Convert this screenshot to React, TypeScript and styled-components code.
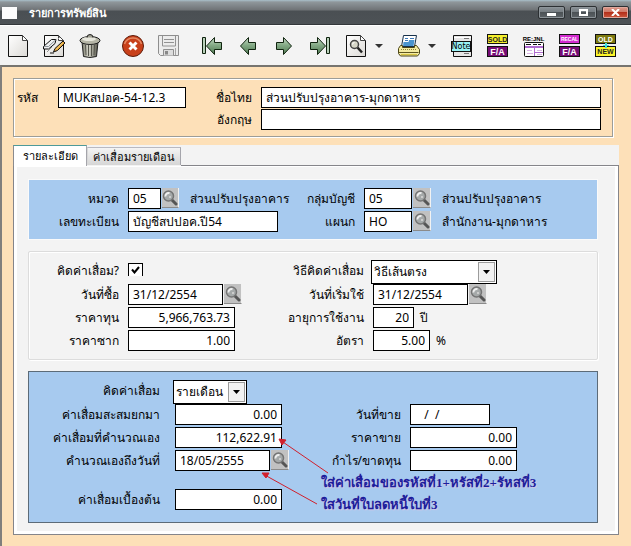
import React from "react";
import styled, { createGlobalStyle } from "styled-components";

const GlobalStyle = createGlobalStyle`
  * { box-sizing: border-box; }
  html, body, #root { height: 100%; }
  body {
    margin: 0;
    background: #fde0b8;
    color: #000;
    font: 12px/20px "Noto Sans", "Liberation Sans", sans-serif;
  }
  input, select, button { font: inherit; color: inherit; }
`;

/* ---------- window chrome ---------- */

const Window = styled.div`
  min-height: 100%;
  display: flex;
  flex-direction: column;
  background: #fde0b8;
`;

const TitleBar = styled.header`
  height: 26px;
  flex: none;
  display: flex;
  align-items: center;
  gap: 12px;
  padding: 0 2px;
  border-bottom: 1px solid #fff;
  background: linear-gradient(#a9c0ca 0, #8f979b 2px, #6f7376 10px, #4a4f53 11px, #4d5256 24px, #33373a 24px);
`;

const WindowMark = styled.span`
  width: 15px;
  height: 12px;
  background: #fcfcfc;
`;

const Title = styled.h1`
  flex: 1;
  margin: 0;
  font-size: 11px;
  line-height: 20px;
  font-weight: 700;
  color: #fff;
`;

const WindowButtons = styled.div`
  display: flex;
  gap: 5px;
`;

const WindowButton = styled.button<{ $close?: boolean }>`
  width: 27px;
  height: 13px;
  padding: 0;
  display: grid;
  place-items: center;
  border: 1px solid #2c3033;
  border-radius: 2px;
  box-shadow: inset 0 0 0 1px ${(p) => (p.$close ? "#e0a79c" : "#8d9499")};
  background: ${(p) =>
    p.$close
      ? "linear-gradient(#dc9a8c 0, #cf7563 50%, #b5301b 50%, #cc5a40 100%)"
      : "linear-gradient(#8b9297 0, #747b80 50%, #4c5256 50%, #5d6367 100%)"};
`;

const Toolbar = styled.div`
  height: 39px;
  flex: none;
  display: flex;
  align-items: center;
  gap: 7px;
  background: #f3f3f3;
`;

const ToolGroup = styled.div`
  display: flex;
  align-items: center;
`;

const ToolButton = styled.button`
  width: 36px;
  height: 36px;
  padding: 0;
  display: grid;
  place-items: center;
  border: 0;
  background: none;
`;

const CaretButton = styled(ToolButton)`
  width: 10px;
`;

const Form = styled.main`
  flex: 1;
  padding: 11px 12px 12px 11px;
  border-top: 2px solid #76746f;
  border-left: 2px solid #807e7c;
`;

/* ---------- fields ---------- */

const TextField = styled.input<{ $width?: number; $align?: "left" | "right" }>`
  width: ${(p) => (p.$width ? `${p.$width}px` : "100%")};
  height: 21px;
  padding: 0 4px;
  border: 1px solid #000;
  border-radius: 0;
  background: #fff;
  text-align: ${(p) => p.$align ?? "left"};
`;

const Label = styled.label`
  justify-self: end;
  padding-top: 1px;
  white-space: nowrap;
`;

const LeadLabel = styled(Label)`
  justify-self: start;
`;

const InsetLabel = styled(Label)`
  margin-right: 6px;
`;

const Field = styled.div`
  display: flex;
  align-items: flex-start;
`;

const Note = styled.span<{ $near?: boolean }>`
  margin-left: ${(p) => (p.$near ? 6 : 11)}px;
  padding-top: 1px;
  white-space: nowrap;
`;

const LookupButton = styled.button`
  width: 18px;
  height: 20px;
  margin-left: 1px;
  padding: 0;
  display: grid;
  place-items: center;
  border: 0;
  border-right: 1px solid #f2f2f2;
  border-bottom: 1px solid #8b8b8b;
  background: #c1c1c1;
`;

const SelectBox = styled.div<{ $width: number }>`
  position: relative;
  width: ${(p) => p.$width}px;
  height: 24px;
  margin-left: -2px;
`;

const SelectField = styled.select`
  width: 100%;
  height: 100%;
  padding: 0 18px 0 2px;
  border: 1px solid #000;
  border-radius: 0;
  background: #fff;
  appearance: none;
`;

const SelectArrow = styled.span`
  position: absolute;
  top: 2px;
  right: 2px;
  bottom: 2px;
  width: 17px;
  display: grid;
  place-items: center;
  border: 1px solid #9c9c9c;
  background: #f2f2f2;
  pointer-events: none;
`;

const CheckCell = styled.span`
  display: grid;
  margin-top: 3px;
  > * { grid-area: 1 / 1; }
  svg { place-self: center; pointer-events: none; visibility: hidden; }
  input:checked + svg { visibility: visible; }
`;

const CheckInput = styled.input`
  width: 15px;
  height: 13px;
  margin: 0;
  border: 1px solid #000;
  border-bottom: 0;
  background: #fff;
  appearance: none;
`;

/* ---------- sections ---------- */

const KeyBox = styled.section`
  display: grid;
  grid-template-columns: 32px 128px 57px minmax(0, 1fr);
  grid-auto-rows: 22px;
  column-gap: 9px;
  margin-right: 6px;
  padding: 8px 11px 5px 3px;
  border: 1px solid #9d9d98;
  box-shadow: 1px 1px 0 #fff, inset 1px 1px 0 #fff;
`;

const EnglishLabel = styled(Label)`
  grid-column: 3;
`;

const TabStrip = styled.div`
  display: flex;
  align-items: flex-end;
  height: 21px;
  margin-top: 8px;
  background: #f3f3f3;
`;

const Tab = styled.button<{ $active?: boolean }>`
  width: ${(p) => (p.$active ? 74 : 94)}px;
  height: ${(p) => (p.$active ? 21 : 18)}px;
  margin-bottom: ${(p) => (p.$active ? 0 : 1)}px;
  padding: 0;
  border: 1px solid #a5a5ab;
  border-top-color: ${(p) => (p.$active ? "#4d9a9a" : "#b9b9c0")};
  border-left-color: ${(p) => (p.$active ? "#8b8b8f" : "#d8d8d8")};
  border-bottom: 0;
  background: ${(p) => (p.$active ? "#fff" : "linear-gradient(#f4f4f4, #d6d6d6)")};
  font-size: 11px;
  line-height: 16px;
  white-space: nowrap;
`;

const TabRule = styled.span`
  flex: 1;
  height: 1px;
  background: #85858a;
`;

const TabBody = styled.div`
  padding: 1px 3px 3px;
  border: 1px solid #85858a;
  border-top: 0;
  background: #fff;
`;

const TabFill = styled.div`
  display: flex;
  flex-direction: column;
  gap: 11px;
  padding: 12px 17px 8px 11px;
  background: #f3f3f3;
`;

const Panel = styled.section<{ $tone: "soft" | "plain" | "framed"; $columns: string; $rows: string }>`
  position: relative;
  display: grid;
  grid-template-columns: ${(p) => p.$columns};
  grid-template-rows: ${(p) => p.$rows};
  column-gap: 9px;
  align-items: start;
  padding: 8px 9px 7px 9px;
  border: 1px solid
    ${(p) => (p.$tone === "soft" ? "#fafafa" : p.$tone === "plain" ? "#dcdcdc" : "#5c6b78")};
  border-radius: ${(p) => (p.$tone === "plain" ? 2 : 0)}px;
  box-shadow: ${(p) => (p.$tone === "plain" ? "inset 1px 1px 0 #fff, 1px 1px 0 #fff" : "none")};
  background: ${(p) => (p.$tone === "plain" ? "#f3f3f3" : "#a7caef")};
`;

/* ---------- callouts drawn over the form ---------- */

const Callouts = styled.div`
  position: absolute;
  left: 292px;
  top: 100px;
  color: #1d1d9c;
  font: 700 13px/22px "Liberation Serif", serif;
  text-shadow: 1px 1px 1px #d9c4e4;
  white-space: nowrap;
  pointer-events: none;
  p { margin: 0; }
`;

const Arrows = styled.svg`
  position: absolute;
  left: 231px;
  top: 64px;
  pointer-events: none;
`;

/* ---------- icons ---------- */

const Caret = () => (
  <svg width="8" height="4" viewBox="0 0 8 4"><path d="M0 0h8L4 4z" fill="#333" /></svg>
);

const Magnifier = () => (
  <svg width="16" height="16" viewBox="0 0 16 16">
    <path d="M9.500 9.500L14 14" stroke="#555" strokeWidth="3" strokeLinecap="round" />
    <circle cx="6.500" cy="6" r="5" fill="#a5a9a9" stroke="#747474" strokeWidth="1.500" />
    <path d="M3.500 6.500a3 3 0 0 1 4-3.200" fill="none" stroke="#eee" strokeWidth="2" />
    <path d="M7 6h2v2H7z" fill="#ccc" />
  </svg>
);

const Svg = ({ children }: { children: React.ReactNode }) => (
  <svg width="24" height="24" viewBox="0 0 24 24">
    <defs>
      <linearGradient id="paper" x1="0" y1="0" x2="1" y2="1">
        <stop offset="0" stopColor="#fff" /><stop offset="1" stopColor="#dcdad6" />
      </linearGradient>
      <linearGradient id="green" x1="0" y1="0" x2="0" y2="1">
        <stop offset="0" stopColor="#c8dcc8" /><stop offset=".45" stopColor="#84aa86" /><stop offset="1" stopColor="#4f7a52" />
      </linearGradient>
      <linearGradient id="can" x1="0" y1="0" x2="1" y2="0">
        <stop offset="0" stopColor="#77776a" /><stop offset=".4" stopColor="#d8d8cc" /><stop offset="1" stopColor="#55554a" />
      </linearGradient>
    </defs>
    {children}
  </svg>
);

const Page = () => (
  <>
    <path d="M2.500 1.500h14l5 5v16h-19z" fill="url(#paper)" stroke="#111" />
    <path d="M16.500 1.500v5h5z" fill="#fff" stroke="#444" />
  </>
);

const NewIcon = () => <Svg><Page /></Svg>;

const EditIcon = () => (
  <Svg>
    <Page />
    <path d="M5 18l5-5M16 5l2-2" stroke="#999" />
    <path d="M1.500 12.500l8-7h4.500l-1 4-6.500 5.500h-5z" fill="#eef0f2" stroke="#111" />
    <path d="M2 12.500h4.500l7-6.500" fill="none" stroke="#8c9298" />
    <path d="M11.500 18l1.500-3.500L21 7l2 2-7.500 7.500z" fill="#e2a33a" stroke="#111" />
    <path d="M14 15.500L20.500 9" stroke="#f8d47c" />
    <path d="M8 19h4" stroke="#111" />
  </Svg>
);

const TrashIcon = () => (
  <Svg>
    <path d="M4 8h16l-1.500 14.500q-6.500 2-13 0z" fill="url(#can)" stroke="#222" />
    <path d="M7.500 11l.5 10M10.500 11v11M13.500 11v11M16.500 11l-.5 10" stroke="#55554c" />
    <ellipse cx="12" cy="6.500" rx="10" ry="4" fill="#b5b5a6" stroke="#222" />
    <ellipse cx="11" cy="5" rx="7" ry="2" fill="#e6e6dc" />
    <path d="M9 3.500q0-3 3-3t3 3" fill="#a0a092" stroke="#222" />
  </Svg>
);

const CancelIcon = () => (
  <Svg>
    <circle cx="12" cy="12" r="10.500" fill="#c8401a" stroke="#5e1c0a" />
    <path d="M3.500 10a9 9 0 0 1 17 0" fill="none" stroke="#e68a64" strokeWidth="1.500" />
    <path d="M8.500 8.500l7 7M15.500 8.500l-7 7" stroke="#fff" strokeWidth="3" />
  </Svg>
);

const SaveIcon = () => (
  <Svg>
    <path d="M1.500 1.500h20v20h-18l-2-2z" fill="#ececec" stroke="#8e8e8e" />
    <path d="M5.500 2v10h13V2M7 5.500h10M7 8.500h10" fill="none" stroke="#929292" />
    <path d="M6.500 21.500v-6h10v6" fill="#ddd" stroke="#8e8e8e" />
    <path d="M8 17h3v3.500H8z" fill="#888" />
    <path d="M18.500 14v7" stroke="#a5a5a5" />
  </Svg>
);

const ArrowIcon = ({ back, stop }: { back?: boolean; stop?: boolean }) => (
  <Svg>
    <g transform={back ? "matrix(-1 0 0 1 24 0)" : undefined}>
      <path
        d={stop ? "M2.500 8.500h7v-5l8 8.500-8 8.500v-5h-7z" : "M4.500 8.500h7v-5l8 8.500-8 8.500v-5h-7z"}
        fill="url(#green)"
        stroke="#10240f"
      />
      {stop && <path d="M18.500 3.500h3v16h-3z" fill="#b9d1ba" stroke="#10240f" />}
    </g>
  </Svg>
);

const PreviewIcon = () => (
  <Svg>
    <Page />
    <path d="M13.500 13.500l4.500 5" stroke="#222" strokeWidth="2.500" />
    <circle cx="10.500" cy="10.500" r="4" fill="#d7d7c8" stroke="#444" strokeWidth="1.500" />
    <path d="M8.500 10.500q0-2 2-2" stroke="#fff" fill="none" />
  </Svg>
);

const PrintIcon = () => (
  <Svg>
    <path d="M6.500 1.500h13l-2 11H4.500z" fill="#fff" stroke="#17304a" />
    <path d="M8 4.500h3M13 4.500h4M8 6.500h3" stroke="#3c78b8" />
    <path d="M12 6h5.500l-1 6H6l.5-4h5z" fill="#4a94cf" />
    <path d="M3.500 11.500h2v2h12v-2h2l3 4v4l-2 2.500h-17l-2-2.500v-5z" fill="#f3eaa0" stroke="#4a4415" />
    <path d="M4 15.500h15" stroke="#8a7f36" strokeDasharray="1 1" />
    <path d="M1.500 18.500h20" stroke="#5d5520" />
    <path d="M4 20.500h16" stroke="#d8c542" />
  </Svg>
);

const NoteIcon = () => (
  <Svg>
    <path d="M3.500 1.500h18v21h-18z" fill="#e6e6e6" stroke="#111" />
    <path d="M4 3.500h17" stroke="#fff" />
    <path d="M14 4.500h5M14 19.500h5" stroke="#777" />
    <rect x="1.500" y="7.500" width="19" height="10" fill="#9af2f4" stroke="#111" />
    <text x="11" y="15" fontSize="8" textAnchor="middle" fontFamily="DejaVu Sans, sans-serif">Note</text>
  </Svg>
);

const BadgeIcon = ({ top, bottom, topFill, topInk, bottomFill, bottomInk, spark }: {
  top: string; bottom: string; topFill: string; topInk: string; bottomFill: string; bottomInk: string; spark?: boolean;
}) => (
  <Svg>
    <g fontFamily="Liberation Sans, sans-serif" textAnchor="middle" fontWeight="700">
      <rect x="1.500" y=".5" width="20" height="9" fill={topFill} stroke="#111" />
      <text x="11.500" y={top.length > 4 ? 7 : 8} fontSize={top.length > 4 ? 5 : 7} fill={topInk}>{top}</text>
      <rect x="1.500" y="12.500" width="20" height="10" fill={bottomFill} stroke="#111" />
      <text x="11.500" y={bottom === "F/A" ? 21 : 20} fontSize={bottom === "F/A" ? 9 : 7} fill={bottomInk}>{bottom}</text>
    </g>
    {spark && <path d="M11 9h2v5h-2zM9 11h6v1H9z" fill="#3fdede" />}
  </Svg>
);

const JournalIcon = () => (
  <Svg>
    <text x="11.500" y="7" fontSize="6" fontWeight="700" textAnchor="middle" fontFamily="Liberation Sans, sans-serif">RE:JNL</text>
    <rect x="2.500" y="8.500" width="19" height="14" rx="1" fill="#fff" stroke="#111" />
    <path d="M4 10.500h5M11 10.500h4M16 10.500h3" stroke="#111" />
    <path d="M3 13h18" stroke="#b06bd0" strokeWidth="2" />
    <path d="M12.500 13v9M13 18.500h8" stroke="#b06bd0" />
    <path d="M5 16.500h5M5 19.500h6M15 16.500h5M15 20.500h5" stroke="#d8b4e6" />
  </Svg>
);

const Lookup = ({ name }: { name: string }) => (
  <LookupButton type="button" aria-label={name}><Magnifier /></LookupButton>
);

const Select = ({ id, width, value }: { id: string; width: number; value: string }) => (
  <SelectBox $width={width}>
    <SelectField id={id} defaultValue={value}><option>{value}</option></SelectField>
    <SelectArrow><svg width="7" height="4" viewBox="0 0 7 4"><path d="M0 0h7L3.500 4z" /></svg></SelectArrow>
  </SelectBox>
);

const Tool = ({ name, children }: { name: string; children: React.ReactNode }) => (
  <ToolButton type="button" aria-label={name}>{children}</ToolButton>
);

export default function App() {
  return (
    <Window>
      <GlobalStyle />
      <TitleBar>
        <WindowMark />
        <Title>รายการทรัพย์สิน</Title>
        <WindowButtons>
          <WindowButton type="button" aria-label="Minimize">
            <svg width="9" height="7"><path d="M0 4h9v3H0z" fill="#fff" /></svg>
          </WindowButton>
          <WindowButton type="button" aria-label="Maximize">
            <svg width="9" height="7"><path d="M1 1h7v5H1z" fill="none" stroke="#fff" strokeWidth="2" /></svg>
          </WindowButton>
          <WindowButton type="button" aria-label="Close" $close>
            <svg width="9" height="7"><path d="M1 0l7 7M8 0L1 7" stroke="#fff" strokeWidth="2" /></svg>
          </WindowButton>
        </WindowButtons>
      </TitleBar>

      <Toolbar>
        <ToolGroup>
          <Tool name="New"><NewIcon /></Tool>
          <Tool name="Edit"><EditIcon /></Tool>
          <Tool name="Delete"><TrashIcon /></Tool>
        </ToolGroup>
        <ToolGroup>
          <Tool name="Cancel"><CancelIcon /></Tool>
          <Tool name="Save"><SaveIcon /></Tool>
        </ToolGroup>
        <ToolGroup>
          <Tool name="First"><ArrowIcon back stop /></Tool>
          <Tool name="Previous"><ArrowIcon back /></Tool>
          <Tool name="Next"><ArrowIcon /></Tool>
          <Tool name="Last"><ArrowIcon stop /></Tool>
          <Tool name="Preview"><PreviewIcon /></Tool>
          <CaretButton type="button" aria-label="Preview options"><Caret /></CaretButton>
        </ToolGroup>
        <ToolGroup>
          <Tool name="Print"><PrintIcon /></Tool>
          <CaretButton type="button" aria-label="Print options"><Caret /></CaretButton>
        </ToolGroup>
        <ToolGroup>
          <Tool name="Note"><NoteIcon /></Tool>
          <Tool name="Sold assets">
            <BadgeIcon top="SOLD" bottom="F/A" topFill="#f4f02c" topInk="#222" bottomFill="#750c75" bottomInk="#fff" />
          </Tool>
          <Tool name="Journal"><JournalIcon /></Tool>
          <Tool name="Recalculate">
            <BadgeIcon top="RECAL" bottom="F/A" topFill="#d42bd0" topInk="#fff" bottomFill="#750c75" bottomInk="#fff" />
          </Tool>
          <Tool name="Old to new">
            <BadgeIcon top="OLD" bottom="NEW" topFill="#7d7a10" topInk="#fff" bottomFill="#fbf52a" bottomInk="#222" spark />
          </Tool>
        </ToolGroup>
      </Toolbar>

      <Form>
        <KeyBox>
          <LeadLabel htmlFor="code">รหัส</LeadLabel>
          <TextField id="code" defaultValue="MUKสปอค-54-12.3" />
          <Label htmlFor="thai">ชื่อไทย</Label>
          <TextField id="thai" defaultValue="ส่วนปรับปรุงอาคาร-มุกดาหาร" />
          <EnglishLabel htmlFor="english">อังกฤษ</EnglishLabel>
          <TextField id="english" />
        </KeyBox>

        <TabStrip role="tablist">
          <Tab type="button" role="tab" aria-selected="true" $active>รายละเอียด</Tab>
          <Tab type="button" role="tab" aria-selected="false">ค่าเสื่อมรายเดือน</Tab>
          <TabRule />
        </TabStrip>

        <TabBody role="tabpanel">
          <TabFill>
            <Panel $tone="soft" $columns="81px 156px 62px 1fr" $rows="23px 21px">
              <Label htmlFor="category">หมวด</Label>
              <Field>
                <TextField id="category" $width={33} defaultValue="05" />
                <Lookup name="Find category" />
                <Note>ส่วนปรับปรุงอาคาร</Note>
              </Field>
              <Label htmlFor="group">กลุ่มบัญชี</Label>
              <Field>
                <TextField id="group" $width={48} defaultValue="05" />
                <Lookup name="Find group" />
                <Note>ส่วนปรับปรุงอาคาร</Note>
              </Field>
              <Label htmlFor="register">เลขทะเบียน</Label>
              <TextField id="register" $width={150} defaultValue="บัญชีสปปอค.ปี54" />
              <Label htmlFor="department">แผนก</Label>
              <Field>
                <TextField id="department" $width={48} defaultValue="HO" />
                <Lookup name="Find department" />
                <Note>สำนักงาน-มุกดาหาร</Note>
              </Field>
            </Panel>

            <Panel $tone="plain" $columns="81px 156px 71px 1fr" $rows="24px 23px 23px 22px">
              <Label htmlFor="depreciate">คิดค่าเสื่อม?</Label>
              <Field>
                <CheckCell>
                  <CheckInput id="depreciate" type="checkbox" defaultChecked />
                  <svg width="9" height="8" viewBox="0 0 9 8"><path d="M1 3.500l2.500 3L8 1" fill="none" stroke="#000" strokeWidth="2" /></svg>
                </CheckCell>
              </Field>
              <Label htmlFor="method">วิธีคิดค่าเสื่อม</Label>
              <Select id="method" width={126} value="วิธีเส้นตรง" />
              <Label htmlFor="bought">วันที่ซื้อ</Label>
              <Field>
                <TextField id="bought" $width={95} defaultValue="31/12/2554" />
                <Lookup name="Pick purchase date" />
              </Field>
              <Label htmlFor="started">วันที่เริ่มใช้</Label>
              <Field>
                <TextField id="started" $width={95} defaultValue="31/12/2554" />
                <Lookup name="Pick start date" />
              </Field>
              <Label htmlFor="cost">ราคาทุน</Label>
              <TextField id="cost" $width={107} $align="right" defaultValue="5,966,763.73" />
              <Label htmlFor="life">อายุการใช้งาน</Label>
              <Field>
                <TextField id="life" $width={41} $align="right" defaultValue="20" />
                <Note $near>ปี</Note>
              </Field>
              <Label htmlFor="scrap">ราคาซาก</Label>
              <TextField id="scrap" $width={107} $align="right" defaultValue="1.00" />
              <Label htmlFor="rate">อัตรา</Label>
              <Field>
                <TextField id="rate" $width={57} $align="right" defaultValue="5.00" />
                <Note $near>%</Note>
              </Field>
            </Panel>

            <Panel $tone="framed" $columns="128px 156px 61px 1fr" $rows="24px 23px 23px 39px 26px">
              <InsetLabel htmlFor="period">คิดค่าเสื่อม</InsetLabel>
              <Select id="period" width={74} value="รายเดือน" />
              <span />
              <span />
              <InsetLabel htmlFor="accumulated">ค่าเสื่อมสะสมยกมา</InsetLabel>
              <TextField id="accumulated" $width={107} $align="right" defaultValue="0.00" />
              <Label htmlFor="sold">วันที่ขาย</Label>
              <TextField id="sold" $width={80} defaultValue="   /  /" />
              <InsetLabel htmlFor="computed">ค่าเสื่อมที่คำนวณเอง</InsetLabel>
              <TextField id="computed" $width={107} $align="right" defaultValue="112,622.91" />
              <Label htmlFor="price">ราคาขาย</Label>
              <TextField id="price" $width={107} $align="right" defaultValue="0.00" />
              <InsetLabel htmlFor="until">คำนวณเองถึงวันที่</InsetLabel>
              <Field>
                <TextField id="until" $width={95} defaultValue="18/05/2555" />
                <Lookup name="Pick computed-until date" />
              </Field>
              <Label htmlFor="profit">กำไร/ขาดทุน</Label>
              <TextField id="profit" $width={107} $align="right" defaultValue="0.00" />
              <InsetLabel htmlFor="initial">ค่าเสื่อมเบื้องต้น</InsetLabel>
              <TextField id="initial" $width={107} $align="right" defaultValue="0.00" />

              <Arrows width="72" height="72" viewBox="0 0 72 72" fill="none" stroke="#d0202c">
                <path d="M68 37L20 4M57 68L3 38" />
                <path d="M19 3l7 1-4 5zM2 37l7 0-3 5z" fill="#d0202c" />
              </Arrows>
              <Callouts>
                <p>ใส่ค่าเสื่อมของรหัสที่1+หรัสที่2+รัหสที่3</p>
                <p>ใสวันที่ใบลดหนี้ใบที่3</p>
              </Callouts>
            </Panel>
          </TabFill>
        </TabBody>
      </Form>
    </Window>
  );
}
